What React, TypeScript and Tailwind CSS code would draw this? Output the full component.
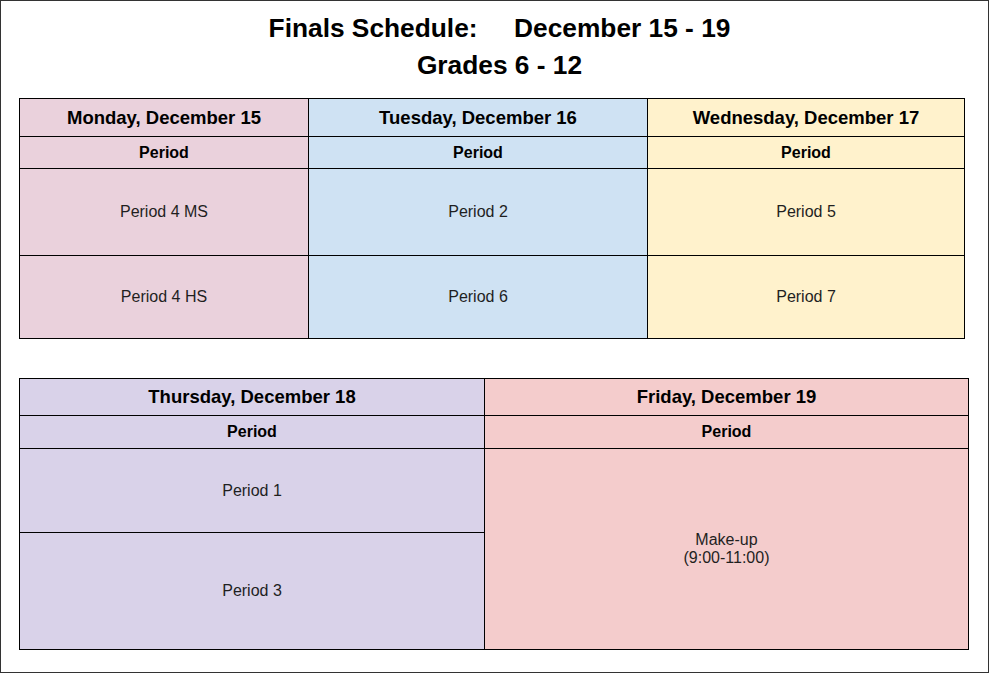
const FONT = "font-['Liberation_Sans',Arial,sans-serif]";

const cell = "flex items-center justify-center border-r border-b border-black text-center";

export default function App() {
  return (
    <div className={`${FONT} h-[673px] w-[989px] border border-[#333] bg-white text-black`}>
      <div className="pt-[9px] pl-[10px] text-center text-[26.3px] font-bold leading-[37px]">
        <div className="whitespace-pre">Finals Schedule:     December 15 - 19</div>
        <div>Grades 6 - 12</div>
      </div>

      <div className="ml-[18px] mt-[14px] grid w-max grid-cols-[289px_339px_317px] grid-rows-[38px_32px_87px_83px] border-l border-t border-black">
        <div className={`${cell} bg-[#ead1dc] text-[18.5px] font-bold`}>Monday, December 15</div>
        <div className={`${cell} bg-[#cfe2f3] text-[18.5px] font-bold`}>Tuesday, December 16</div>
        <div className={`${cell} bg-[#fff2cc] text-[18.5px] font-bold`}>Wednesday, December 17</div>

        <div className={`${cell} bg-[#ead1dc] text-[16px] font-bold`}>Period</div>
        <div className={`${cell} bg-[#cfe2f3] text-[16px] font-bold`}>Period</div>
        <div className={`${cell} bg-[#fff2cc] text-[16px] font-bold`}>Period</div>

        <div className={`${cell} bg-[#ead1dc] text-[16px] text-[#1f1f1f]`}>Period 4 MS</div>
        <div className={`${cell} bg-[#cfe2f3] text-[16px] text-[#1f1f1f]`}>Period 2</div>
        <div className={`${cell} bg-[#fff2cc] text-[16px] text-[#1f1f1f]`}>Period 5</div>

        <div className={`${cell} bg-[#ead1dc] text-[16px] text-[#1f1f1f]`}>Period 4 HS</div>
        <div className={`${cell} bg-[#cfe2f3] text-[16px] text-[#1f1f1f]`}>Period 6</div>
        <div className={`${cell} bg-[#fff2cc] text-[16px] text-[#1f1f1f]`}>Period 7</div>
      </div>

      <div className="ml-[18px] mt-[39px] grid w-max grid-cols-[465px_484px] grid-rows-[37px_33px_84px_117px] border-l border-t border-black">
        <div className={`${cell} bg-[#d9d2e9] text-[18.5px] font-bold`}>Thursday, December 18</div>
        <div className={`${cell} bg-[#f4cccc] text-[18.5px] font-bold`}>Friday, December 19</div>

        <div className={`${cell} bg-[#d9d2e9] text-[16px] font-bold`}>Period</div>
        <div className={`${cell} bg-[#f4cccc] text-[16px] font-bold`}>Period</div>

        <div className={`${cell} bg-[#d9d2e9] text-[16px] text-[#1f1f1f]`}>Period 1</div>
        <div className={`${cell} row-span-2 bg-[#f4cccc] text-[16px] leading-[18px] text-[#1f1f1f]`}>
          Make-up
          <br />
          (9:00-11:00)
        </div>
        <div className={`${cell} bg-[#d9d2e9] text-[16px] text-[#1f1f1f]`}>Period 3</div>
      </div>
    </div>
  );
}
